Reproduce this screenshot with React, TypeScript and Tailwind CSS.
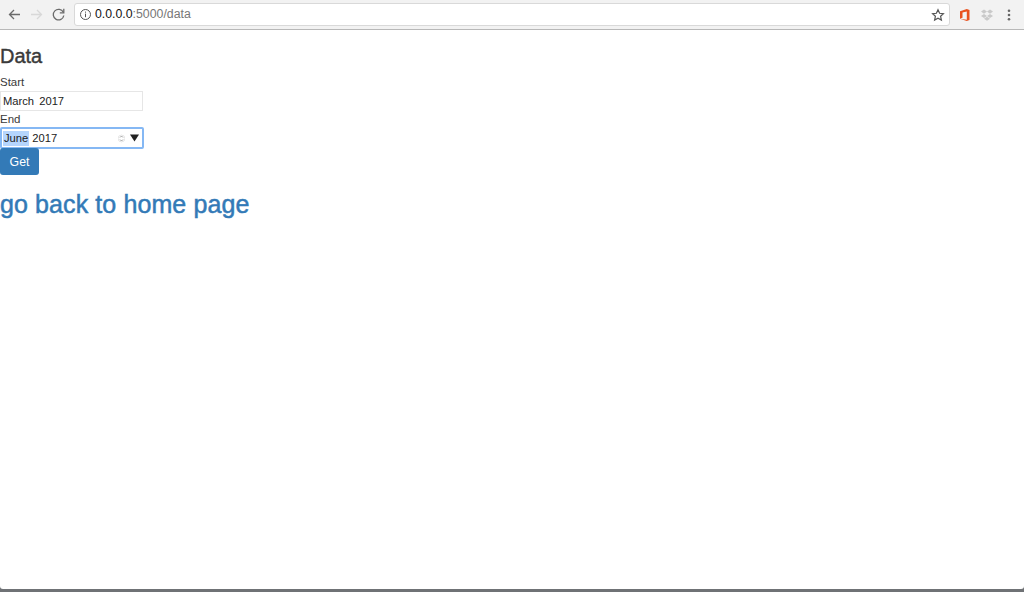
import React from "react";

function Toolbar() {
  return (
    <div className="flex h-[30px] items-center bg-[#f2f2f2] border-b border-[#b8b8b8] shrink-0">
      <div className="flex w-[74px] items-center shrink-0 pl-[7px] gap-[7px]">
        <svg width="15" height="15" viewBox="0 0 15 15" fill="none" stroke="#6a6a6a" strokeWidth="1.3">
          <path d="M13 7.5H2.5M7 3L2.5 7.5 7 12" />
        </svg>
        <svg width="15" height="15" viewBox="0 0 15 15" fill="none" stroke="#d8d8d8" strokeWidth="1.3">
          <path d="M2 7.5H12.5M8 3l4.5 4.5L8 12" />
        </svg>
        <svg width="15" height="15" viewBox="0 0 15 15" fill="none" stroke="#6a6a6a" strokeWidth="1.3">
          <path d="M12.3 5.2A5.3 5.3 0 1 0 12.8 8.5" />
          <path d="M12.8 1.8v4h-4" />
        </svg>
      </div>
      <div className="flex h-[23px] w-[876px] items-center rounded-[3px] border border-[#d9d9d9] bg-white pl-[4px] pr-[5px] shrink-0">
        <svg width="13" height="13" viewBox="0 0 13 13" fill="none" stroke="#555" strokeWidth="1" className="shrink-0">
          <circle cx="6.5" cy="6.5" r="5" />
          <path d="M6.5 5.6v3.6M6.5 3.6v1.1" />
        </svg>
        <span className="ml-[3px] text-[12.3px] leading-none text-[#111] font-['Liberation_Sans',sans-serif]">
          0.0.0.0<span className="text-[#777]">:5000/data</span>
        </span>
        <svg width="14" height="14" viewBox="0 0 14 14" fill="none" stroke="#555" strokeWidth="1.2" className="ml-auto mr-[-1px]">
          <path d="M7 1.8l1.6 3.5 3.8.4-2.8 2.6.8 3.8L7 10.2l-3.4 1.9.8-3.8L1.6 5.7l3.8-.4z" />
        </svg>
      </div>
      <div className="ml-[8px] flex items-center gap-[9px]">
        <svg width="14" height="14" viewBox="0 0 14 14">
          <path d="M2 3.2L8.8 1l2.7.9v10.2L8.8 13 2 10.8l6.8.9V3.4L4.5 4.4v5.4L2 10.8z" fill="#e8511f" />
        </svg>
        <svg width="14" height="14" viewBox="0 0 14 14" fill="#c9c9c9" className="-ml-[1px]">
          <path d="M4 1.5L7 3.6 4 5.7 1 3.6zM10 1.5l3 2.1-3 2.1-3-2.1zM4 5.9L7 8 4 10.1 1 8zM10 5.9L13 8l-3 2.1L7 8zM4 10.8l3-2 3 2-3 2z" />
        </svg>
        <svg width="12" height="14" viewBox="0 0 12 14" fill="#666">
          <circle cx="6" cy="2.8" r="1.3" />
          <circle cx="6" cy="7" r="1.3" />
          <circle cx="6" cy="11.2" r="1.3" />
        </svg>
      </div>
    </div>
  );
}

export default function App() {
  return (
    <div className="flex h-[592px] w-[1024px] flex-col overflow-hidden bg-[#6f7275] font-['Liberation_Sans',Arial,sans-serif]">
      <div className="flex h-[589px] flex-col bg-white rounded-b-[3px] shrink-0">
        <Toolbar />
        <main className="flex flex-col items-start pt-[15px] text-[#3a3a3a]">
          <h3 className="text-[20px] leading-[23px] font-normal [-webkit-text-stroke:0.4px_#3a3a3a]">Data</h3>
          <label className="mt-[6px] block text-[11.5px] leading-[16px] pb-[1px]">Start</label>
          <div className="flex h-[20px] w-[143px] items-center border border-[#e6e6e6] bg-white pl-[2px] pt-[1px] text-[11.2px] text-[#222] [word-spacing:2px]">
            March 2017
          </div>
          <label className="block text-[11.5px] leading-[15px] pt-[1px]">End</label>
          <div className="flex h-[22px] w-[144px] items-center rounded-[2px] border-2 border-[#85b8f4] bg-white pl-0 pr-[3px] text-[11.2px] text-[#222]">
            <span className="bg-[#b5d5fd] px-[1px] leading-[15px] ml-[1px]">June</span>
            <span className="ml-[3px]">2017</span>
            <svg width="7" height="11" viewBox="0 0 7 11" className="ml-auto mr-[5px]" fill="none" stroke="#8a8a8a" strokeWidth="0.8">
              <circle cx="3.5" cy="5.5" r="3.4" stroke="#e0e0e0" />
              <path d="M2 4.5l1.5-1.5 1.5 1.5M2 6.5l1.5 1.5 1.5-1.5" />
            </svg>
            <svg width="9" height="8" viewBox="0 0 9 8" fill="#222">
              <path d="M0 0.5h9L4.5 7.5z" />
            </svg>
          </div>
          <button className="-mt-px h-[27px] w-[39px] rounded-[3px] bg-[#337ab7] pt-[1px] text-[12.3px] text-white">Get</button>
          <a href="#" className="mt-[14px] text-[25px] leading-[30px] text-[#337ab7] tracking-[0.1px] [-webkit-text-stroke:0.5px_#337ab7]">
            go back to home page
          </a>
        </main>
      </div>
    </div>
  );
}
